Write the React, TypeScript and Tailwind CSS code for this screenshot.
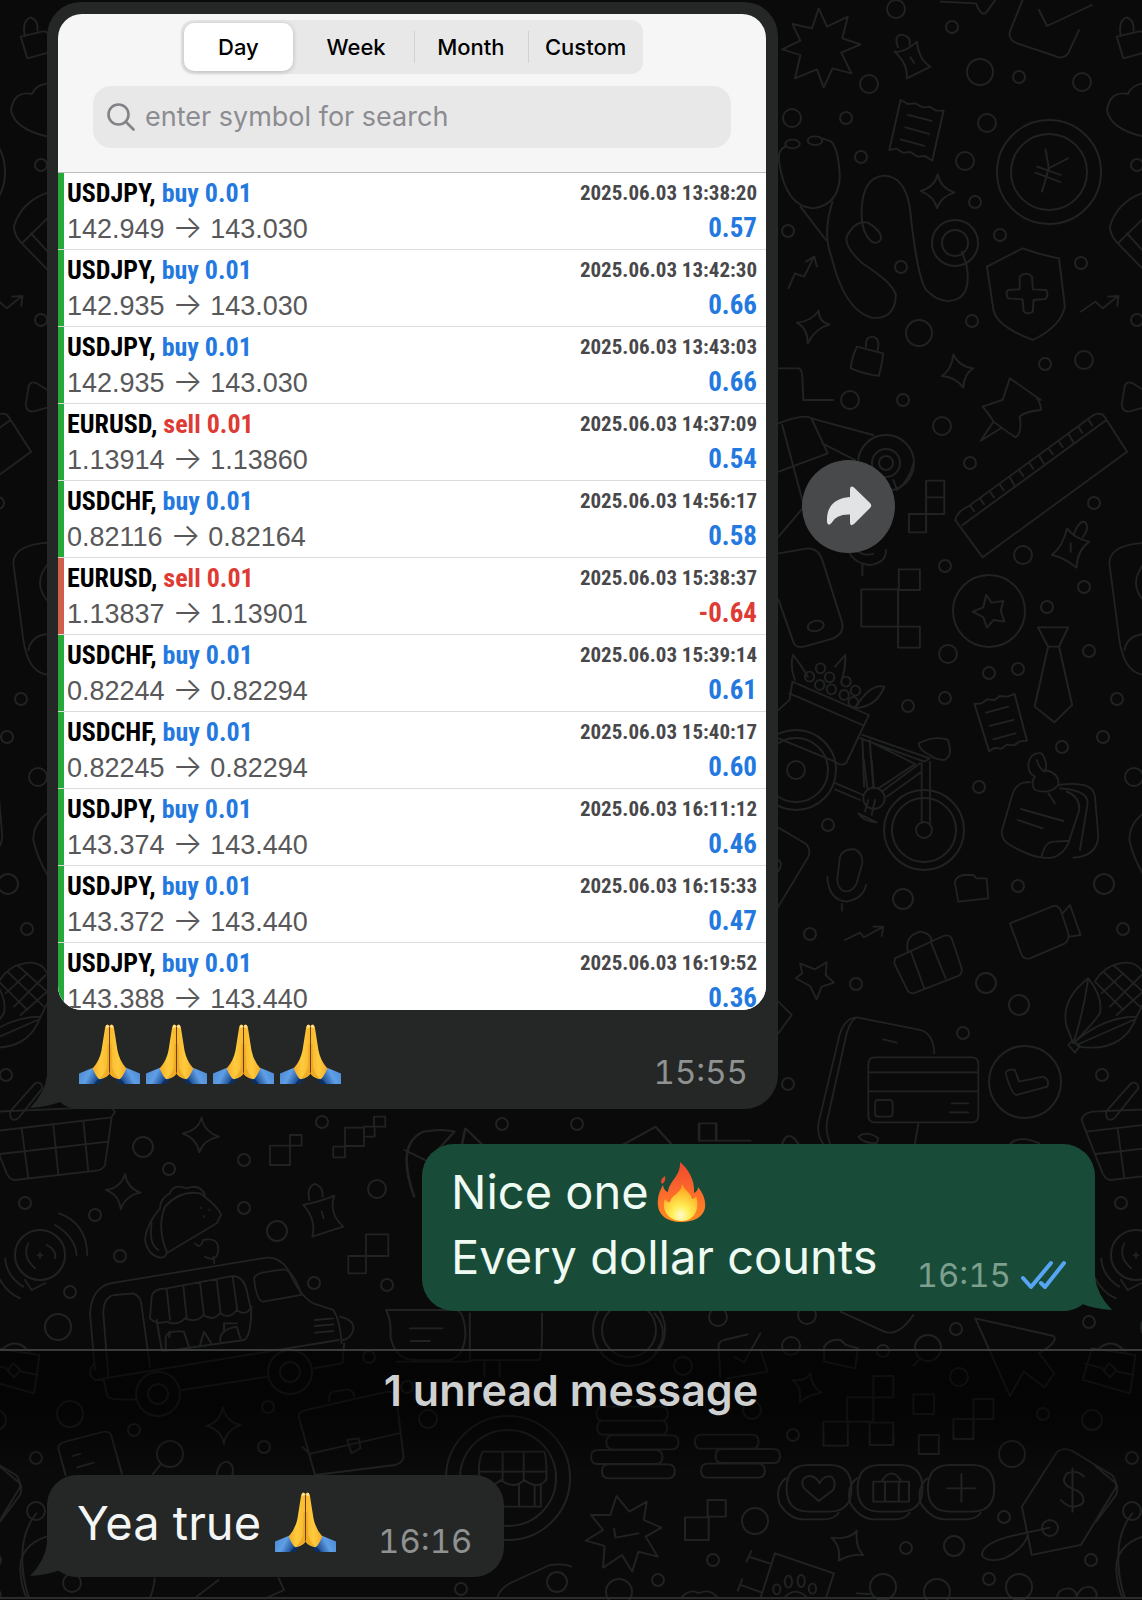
import React from "react";

type Trade = {
  symbol: string;
  side: "buy" | "sell";
  from: string;
  to: string;
  time: string;
  profit: string;
};

const trades: Trade[] = [
  { symbol: "USDJPY", side: "buy", from: "142.949", to: "143.030", time: "2025.06.03 13:38:20", profit: "0.57" },
  { symbol: "USDJPY", side: "buy", from: "142.935", to: "143.030", time: "2025.06.03 13:42:30", profit: "0.66" },
  { symbol: "USDJPY", side: "buy", from: "142.935", to: "143.030", time: "2025.06.03 13:43:03", profit: "0.66" },
  { symbol: "EURUSD", side: "sell", from: "1.13914", to: "1.13860", time: "2025.06.03 14:37:09", profit: "0.54" },
  { symbol: "USDCHF", side: "buy", from: "0.82116", to: "0.82164", time: "2025.06.03 14:56:17", profit: "0.58" },
  { symbol: "EURUSD", side: "sell", from: "1.13837", to: "1.13901", time: "2025.06.03 15:38:37", profit: "-0.64" },
  { symbol: "USDCHF", side: "buy", from: "0.82244", to: "0.82294", time: "2025.06.03 15:39:14", profit: "0.61" },
  { symbol: "USDCHF", side: "buy", from: "0.82245", to: "0.82294", time: "2025.06.03 15:40:17", profit: "0.60" },
  { symbol: "USDJPY", side: "buy", from: "143.374", to: "143.440", time: "2025.06.03 16:11:12", profit: "0.46" },
  { symbol: "USDJPY", side: "buy", from: "143.372", to: "143.440", time: "2025.06.03 16:15:33", profit: "0.47" },
  { symbol: "USDJPY", side: "buy", from: "143.388", to: "143.440", time: "2025.06.03 16:19:52", profit: "0.36" },
];

/* Wallpaper rings: centre x, centre y, radius. */
const rings: [number, number, number][] = [
  [896, 9, 9], [952, 27, 6], [869, 84, 9], [980, 72, 13], [1019, 77, 6], [1082, 82, 9], [792, 118, 9], [846, 118, 6],
  [987, 123, 9], [861, 157, 6], [965, 161, 9], [975, 202, 6], [1000, 235, 6], [1049, 172, 52], [1049, 172, 38],
  [788, 231, 6], [901, 267, 6], [955, 243, 23], [955, 243, 13], [1081, 263, 6], [972, 321, 6], [919, 333, 13],
  [1045, 364, 6], [1084, 360, 9], [1137, 165, 6], [1137, 320, 6], [850, 400, 9], [903, 400, 6],
  [942, 426, 9], [970, 463, 6], [1094, 503, 6], [1023, 555, 9], [945, 566, 6], [1084, 587, 6], [1047, 607, 6],
  [989, 611, 36], [948, 654, 9], [1089, 651, 6], [989, 673, 6], [1018, 669, 6], [1117, 699, 6], [945, 698, 6],
  [908, 706, 6], [1103, 737, 6], [1062, 747, 6], [979, 787, 6], [1134, 777, 9], [886, 463, 7], [886, 463, 14],
  [886, 463, 28], [796, 770, 9], [796, 770, 32], [796, 770, 40], [828, 825, 6], [903, 899, 10], [1018, 886, 6],
  [1104, 884, 10], [810, 934, 6], [1123, 929, 6], [856, 984, 6], [986, 983, 10], [1019, 1005, 10], [963, 1033, 6],
  [788, 1084, 6], [1102, 1075, 6], [1025, 1082, 36], [924, 830, 8], [924, 830, 32], [924, 830, 40],
  [143, 1147, 10], [169, 1169, 6], [322, 1122, 6], [244, 1160, 6], [25, 1203, 6], [95, 1215, 6], [244, 1208, 6],
  [377, 1189, 9], [277, 1231, 10], [120, 1256, 6], [70, 1292, 6], [314, 1283, 6], [387, 1285, 6], [58, 1327, 13],
  [40, 1255, 25], [70, 1414, 13], [134, 1430, 6], [36, 1458, 6], [170, 1454, 13], [264, 1447, 6], [268, 1407, 6],
  [36, 1511, 9], [369, 1357, 6], [428, 1419, 9], [158, 1394, 22], [158, 1394, 10], [290, 1372, 22], [290, 1372, 10],
  [508, 1478, 62], [508, 1478, 48], [461, 1589, 6], [557, 1582, 10], [72, 1583, 9], [407, 1387, 6],
  [718, 1317, 9], [807, 1315, 9], [791, 1346, 9], [883, 1351, 6], [928, 1348, 13], [956, 1329, 6], [1089, 1322, 6],
  [683, 1366, 9], [959, 1377, 9], [1092, 1420, 10], [1043, 1414, 6], [1012, 1454, 13], [793, 1435, 6], [752, 1410, 9],
  [755, 1521, 13], [713, 1560, 6], [954, 1546, 10], [906, 1548, 6], [1004, 1517, 6], [1091, 1560, 6], [658, 1580, 6],
  [989, 1579, 6], [883, 1587, 13], [937, 1592, 13], [1019, 1587, 13], [619, 1592, 13], [1050, 1528, 8],
  [629, 1330, 36], [629, 1330, 27], [502, 1124, 6], [577, 1124, 6],
];

/* Wallpaper doodles, grouped by the sheet region they belong to. */
const sheets: { place: string; d: string[] }[] = [
  {
    place: "scale(.3642 .3333)",
    d: [
      "M57 110L115 95Q131 90 134 110L142 155L75 175ZM68 108Q60 60 85 52Q105 60 103 92",
      "M140 250Q100 250 88 282Q40 270 30 330Q40 390 140 412",
      "M140 575Q60 600 38 680Q40 710 60 730L140 820M60 730L135 650M85 700L131 755",
    ],
  },
  {
    place: "translate(571 0) scale(.3642 .3333)",
    d: [
      "M680 25L703 80L760 50L745 115L795 133L742 158L770 220L718 205L694 262L675 208L615 235L630 165L580 148L630 122L608 72L662 85Z",
      "M888 155Q915 160 950 125Q955 180 987 200L922 235Q925 190 888 155ZM898 142Q885 105 910 104Q935 110 930 135M932 172l10 16",
      "M1240 0L1205 95Q1200 120 1225 130L1340 172Q1355 175 1365 160L1395 90M1285 30L1307 78L1430 15",
      "M1015 5L1112 10Q1130 60 1145 30L1165 0",
      "M905 300l20 12l20 -2l20 12l20 -2l18 12l20 0L992 482l-20 -14l-20 2l-20 -14l-20 2l-18 -12l-20 4ZM925 345l65 18M918 382l65 20M905 418l65 20",
      "M590 440Q565 450 572 490Q590 620 665 625Q735 615 738 530Q735 450 715 425L690 415",
      "M588 432a20 13 0 1 0 40 0a20 13 0 1 0 -40 0M650 422a20 13 0 1 0 40 0a20 13 0 1 0 -40 0",
      "M630 620L700 720M718 605Q690 700 715 770Q750 930 825 953Q890 960 892 885Q885 850 800 790Q750 740 757 710Q780 660 815 668Q850 690 852 715Q845 735 825 725Q800 700 798 650Q795 530 862 527Q915 530 930 620Q950 830 975 870Q1020 920 1065 895Q1100 870 1085 790L1073 755",
      "M1007 523Q1015 565 1053 577Q1015 590 1005 625Q998 590 960 573Q998 562 1007 523Z",
      "M1303 448L1312 505L1365 475M1312 505L1293 575M1280 500l65 25M1275 518l68 28",
      "M1142 800L1240 745Q1290 765 1340 775L1356 920Q1345 980 1268 1020Q1170 980 1160 930Z",
      "M1232 830Q1250 812 1266 830L1268 868L1305 870Q1312 885 1303 897L1270 900L1268 935Q1255 945 1243 935L1240 898L1200 895Q1192 880 1200 870L1232 868Z",
      "M597 865L615 820L640 830L665 775M645 785L668 770L675 800M1400 935L1440 905L1460 925L1500 890M1475 890L1503 888L1500 918",
      "M680 932Q680 965 710 973Q670 985 650 1030Q650 985 620 968Q660 965 680 932ZM1050 1063Q1065 1100 1105 1105Q1080 1120 1077 1163Q1055 1130 1018 1128Q1045 1110 1050 1063Z",
      "M785 1040Q770 1075 768 1105Q800 1120 845 1128Q855 1090 857 1060ZM810 1040Q808 1008 830 1010Q850 1018 842 1050",
      "M570 1105L625 1105Q635 1110 635 1130L638 1200L720 1200M1130 1220L1185 1200L1205 1135L1290 1200",
    ],
  },
  {
    place: "translate(571 400) scale(.3642 .3333)",
    d: [
      "M1130 20Q1150 45 1160 65Q1190 90 1220 112Q1240 100 1232 50Q1245 35 1290 30Q1290 10 1280 -5M1160 65L1125 122L1180 85",
      "M1055 360Q1060 335 1090 320L1435 45Q1455 35 1465 50L1527 155L1130 472ZM1075 375L1470 60",
      "M1097 318l10 16M1124 297l10 16M1151 276l10 16M1178 255l10 16M1205 233l12 22M1232 212l10 16M1259 190l10 16M1286 168l12 22M1313 147l10 16M1340 125l10 16M1367 104l12 22M1394 82l10 16M1421 60l10 16",
      "M975 242H1025V342H975ZM975 292H1025M928 342H975V397H928ZM797 568H898V680H797ZM900 508H958V570H900ZM898 680H958V743H898Z",
      "M570 70Q640 40 660 55L830 105M660 55L705 160L570 215M580 75L640 320L570 410M690 130L780 180M940 190Q930 240 895 270L885 240",
      "M570 460L650 445Q680 445 690 480L745 670Q750 700 720 715L640 740Q615 745 610 725L570 600M650 682a22 15 -15 1 0 44 -8a22 15 -15 1 0 -44 8",
      "M765 460Q780 490 820 495Q865 490 865 450M785 450Q800 470 830 462M800 495V525",
      "M1362 385Q1380 415 1423 425Q1390 450 1388 503Q1350 470 1320 465Q1350 440 1362 385ZM1382 400Q1395 360 1412 366Q1425 385 1405 412M1372 430v25",
      "M1140 585L1155 608L1187 603L1180 632L1190 665L1160 660L1142 683L1132 652L1103 635L1132 622Z",
      "M1282 682H1365L1340 740H1310ZM1310 740L1273 920L1327 967L1376 915L1340 740",
      "M1108 912l20 -2l15 -12l20 2l15 -12l20 2l20 -8L1252 1022l-20 2l-15 12l-20 -2l-15 12l-20 -2l-14 10ZM1140 938l60 -18M1150 978l65 -18M1160 1018l60 -18",
      "M608 845L818 945L755 1090Q740 1100 725 1085L570 1015M600 880L800 975M608 845L600 900L570 930M615 840Q600 800 610 765Q635 800 650 830M725 800L753 765Q755 800 745 835M780 925Q820 850 860 860Q840 920 780 925",
      "M672 805a13 15 0 1 0 26 0a13 15 0 1 0 -26 0M642 830a13 15 0 1 0 26 0a13 15 0 1 0 -26 0M697 832a13 15 0 1 0 26 0a13 15 0 1 0 -26 0M670 855a13 15 0 1 0 26 0a13 15 0 1 0 -26 0M702 868a13 15 0 1 0 26 0a13 15 0 1 0 -26 0M742 845a13 15 0 1 0 26 0a13 15 0 1 0 -26 0M768 872a13 15 0 1 0 26 0a13 15 0 1 0 -26 0M737 885a13 15 0 1 0 26 0a13 15 0 1 0 -26 0M762 906a13 15 0 1 0 26 0a13 15 0 1 0 -26 0",
      "M800 1005L985 1075L970 1085L795 1015M820 1020L830 1160M800 1015L805 1160M822 1025L945 1092L845 1165M955 1030Q1000 1005 1035 1020Q1050 1070 1025 1080Q1000 1080 985 1065Q955 1050 955 1030Z",
    ],
  },
  {
    place: "translate(740 760) scale(.3333)",
    d: [
      "M850 68Q825 75 815 110L785 215Q785 240 810 255Q870 290 910 293Q960 300 985 250L1018 150Q1020 110 980 95M850 68L870 66M905 290Q915 245 940 245L983 243M955 75Q1060 60 1065 110L1075 230Q1070 290 1000 293M960 85Q1045 90 1043 130L1020 270M843 147L970 183M833 180L908 205",
      "M865 15Q870 -25 905 -20Q925 10 915 30Q960 40 955 75Q930 105 885 90Q870 70 885 50Q865 40 865 15ZM890 0Q900 30 915 35M925 100l20 30",
      "M545 10V190M570 5V190M282 68L370 105M285 88L360 120M395 0L402 85M372 0L382 85M425 95L540 10M440 110L545 35M370 115a32 32 0 1 0 64 0a32 32 0 1 0 -64 0M385 120L375 155M405 120L395 165M355 160Q370 185 410 187L355 160",
      "M115 203L195 250Q215 265 205 290L115 440M115 300q16 10 0 34",
      "M300 290Q310 265 345 268Q370 280 367 310L350 370Q335 400 310 393Q290 380 292 355ZM262 350Q265 420 320 425Q370 415 378 375M306 432V452",
      "M645 370Q645 350 670 345H700L710 355H740L745 415Q700 420 655 425Z",
      "M810 490L940 438Q955 435 962 450L985 520Q988 540 975 550L870 595Q850 600 843 580ZM968 460L990 435L1022 525L988 530",
      "M315 540L360 518L372 532L430 500M400 500H430L425 528",
      "M465 595L610 528Q628 522 635 535L665 625Q668 640 655 648L520 700Q508 700 502 690L463 610ZM512 573L553 685M572 545L617 655M505 578Q490 530 540 515Q575 520 575 545",
      "M180 610L225 628L260 607L257 645L282 668L245 680L230 718L210 678L167 655L187 640Z",
      "M1045 655Q960 720 980 800L1000 850Q1030 760 1045 655Q1090 710 1080 760Q1060 790 1010 840M1000 850Q1090 770 1190 770Q1150 880 1015 860M1010 855L1180 780M985 855l12 -12l22 15l-14 20Z",
      "M1065 665Q1090 620 1140 610Q1190 600 1210 640Q1235 680 1215 720L1190 770M1065 665L1150 750M1090 635L1200 740M1110 740L1205 645M1085 700L1150 640M1120 615L1215 700M1130 765L1215 690",
      "M115 725L155 765L115 820",
      "M250 1152Q225 1120 240 1070L300 820Q315 775 350 772L540 810Q580 820 583 880M270 1150Q255 1110 262 1080L320 820Q330 785 350 772M430 838L470 848M535 1092L525 1150M355 1130Q380 1110 415 1135L410 1150Q370 1150 355 1130",
      "M405 892H695Q715 892 715 912V1067Q715 1087 695 1087H405Q385 1087 385 1067V912Q385 892 405 892ZM385 937H715M385 994H715M415 1020H448Q458 1020 458 1030V1060Q458 1070 448 1070H415Q405 1070 405 1060V1030Q405 1020 415 1020ZM635 1030H685M630 1057H685",
      "M797 940Q800 925 825 930L837 965L910 950Q930 960 922 980L830 1005Q815 1005 797 940Z",
    ],
  },
  {
    place: "translate(0 320) scale(.3333)",
    d: ["M145 212L110 190Q88 180 85 205L77 255Q80 275 98 275L145 262", "M145 1478Q100 1510 100 1560Q110 1610 145 1670"],
  },
  {
    place: "translate(0 500) scale(.3333)",
    d: ["M145 128Q40 135 40 190L70 420Q85 520 145 525M145 190Q95 250 145 305M85 450Q95 405 145 402"],
  },
  {
    place: "translate(0 960) scale(.3333)",
    d: [
      "M-43 480Q-40 460 -10 455L330 440L345 455L335 472L-30 515ZM-30 515L20 640Q30 660 45 660L290 632Q310 628 315 615L335 472M65 505L85 655M160 495L175 645M250 482L265 635M0 582L325 545",
      "M30 455L105 370Q125 362 127 385L55 475Q30 490 30 455Z",
      "M605 472Q612 515 657 530Q610 540 598 577Q590 535 548 520Q595 512 605 472ZM375 642Q382 685 422 698Q378 705 362 748Q358 705 317 690Q362 685 375 642Z",
      "M810 557H870V615H810ZM870 525H905V557H870ZM1035 503H1092V558H1035ZM1000 560H1035V592H1000ZM1092 500h32v30h-32ZM1122 470h34v30h-34ZM1098 823H1165V888H1098ZM1045 888H1098V940H1045Z",
      "M480 745Q440 790 435 840Q445 890 485 893Q500 890 500 875Q470 800 495 740Q540 690 600 700Q655 740 663 765L650 790L500 880M480 745Q480 715 510 700Q520 670 560 685Q600 670 615 705M455 790Q445 850 475 870M585 850Q600 870 610 840Q655 830 655 870Q650 910 615 890M640 890L643 910M603 742v2M628 748v2M612 768v2",
      "M75 960L95 990L135 970M85 850Q65 890 105 925M140 855Q170 870 165 895M165 795Q225 830 230 885M178 760Q260 790 262 885M15 895Q20 950 70 980M-5 950Q20 1000 60 1015M113 886h14M120 879v14",
      "M910 735Q960 725 1003 707Q985 760 1030 800L937 830Q950 780 910 735ZM928 720Q920 680 945 672Q970 680 968 710M965 755l6 20",
      "M285 1230L270 1060Q275 985 330 970L800 893Q840 890 865 930Q900 1010 940 1030L1000 1050Q1020 1080 1025 1150M325 1250L310 1060Q310 1010 345 1005L400 1000Q425 1010 425 1040L450 1220",
      "M762 955Q770 940 790 937L850 928Q880 930 905 1005L790 1025Q770 1025 762 955Z",
      "M455 1010Q460 985 500 985L700 948Q730 950 740 990L752 1045Q735 1070 710 1050Q690 1080 660 1060Q640 1085 610 1065Q590 1090 555 1075Q530 1100 500 1085Q470 1095 450 1075ZM500 985L510 1080M550 978L560 1072M600 968L612 1065M650 958L662 1060M698 950L712 1050",
      "M1020 1070Q1065 1080 1060 1110Q1050 1140 1025 1140M945 1080l55 -5M945 1098l55 -5M945 1118l55 -5",
    ],
  },
  {
    place: "translate(0 1300) scale(.3642 .3333)",
    d: [
      "M270 238L930 120M260 190Q235 215 260 240L285 240L295 290Q305 302 375 298M500 270L735 230M860 205L940 190L945 130M430 60L445 155L670 120Q690 110 690 20",
      "M455 150V110Q460 90 505 95L520 145M465 95V112M548 140L560 95L580 130M605 125Q600 90 650 80L660 115M615 90V70H650",
      "M820 350Q820 335 840 330L1065 275Q1085 275 1088 290L1108 470Q1105 490 1085 495L865 525ZM830 440L850 462L1095 400M905 305Q900 280 915 275L955 268Q970 270 973 290M953 420L985 415L990 445L965 460Z",
      "M440 495L420 522M595 525Q600 485 625 485Q645 495 638 525",
      "M612 322Q620 365 660 375Q620 390 615 432Q608 390 567 378Q605 365 612 322Z",
      "M180 525L160 445Q160 430 180 425L285 395Q300 393 305 405L335 522M200 468l20 -6M212 502l45 -14",
      "M1060 30Q1075 60 1072 110Q1085 180 1140 180H1235Q1275 170 1278 100Q1275 40 1255 30ZM1125 85H1215M1128 123H1180M1290 40V180H1480Q1490 175 1488 40M1090 185H1290M1330 185V230M1372 185V230",
      "M1325 455H1495Q1502 480 1500 540M1325 455Q1310 490 1318 540Q1345 570 1375 540Q1410 570 1440 540Q1475 570 1500 540M1380 455V540M1438 455V540M1318 515H1498M1485 555V620H1345V555M1425 550V615M1468 555V618",
      "M0 500L55 550Q62 565 55 585L0 665M100 640Q55 700 62 800Q65 850 80 895M425 835Q420 880 410 895M540 890L600 840M765 835L780 870L730 895M1365 895Q1370 870 1400 850L1510 795Q1550 790 1568 800",
    ],
  },
  {
    place: "translate(571 1300) scale(.3642 .3333)",
    d: [
      "M230 40Q275 100 230 160M740 35L860 95Q900 110 940 45",
      "M410 230L405 140Q405 125 420 120L485 103M520 150L540 215L430 235M450 172L475 187L520 100",
      "M695 140Q710 115 740 120L755 135L788 145L780 205L695 185Z",
      "M1110 55L1325 108Q1340 125 1285 160L1327 220L1300 262L1243 215L1205 288ZM955 180L940 198",
      "M1430 145L1550 165L1535 280L1405 240ZM1410 190L1460 205M1500 215L1545 225M1478 190l20 20l-18 22l-18 -20ZM1450 145Q1490 110 1525 160",
      "M657 220Q660 260 688 278Q650 285 628 308Q635 260 608 240Q645 245 657 220ZM785 692Q780 740 802 765Q765 762 735 782Q742 740 715 713Q765 720 785 692Z",
      "M830 228H885V292H830ZM758 292H830V365H758ZM693 365H760V437H693ZM820 368H885V435H820ZM940 283H997V342H940ZM955 405H1010V462H955ZM1105 297H1160V357H1105ZM1050 357H1105V417H1050ZM375 600H425V650H375ZM313 652H378V720H313Z",
      "M88 320h160q18 0 18 21t-18 21h-160q-18 0 -18 -21t18 -21ZM90 362h156q18 0 18 21t-18 21h-156q-18 0 -18 -21t18 -21ZM115 406h162q18 0 18 21t-18 21h-162q-18 0 -18 -21t18 -21ZM73 450h160q18 0 18 21t-18 21h-160q-18 0 -18 -21t18 -21ZM103 493h164q18 0 18 21t-18 21h-164q-18 0 -18 -21t18 -21ZM358 404h139q18 0 18 21t-18 21h-139q-18 0 -18 -21t18 -21ZM415 447h141q18 0 18 21t-18 21h-141q-18 0 -18 -21t18 -21ZM375 491h139q18 0 18 21t-18 21h-139q-18 0 -18 -21t18 -21Z",
      "M652 495h58q60 0 60 70t-60 70h-58q-60 0 -60 -70t60 -70ZM847 495h58q60 0 60 70t-60 70h-58q-60 0 -60 -70t60 -70ZM1040 495h62q60 0 60 70t-60 70h-62q-60 0 -60 -70t60 -70Z",
      "M590 535Q560 560 572 610Q600 660 640 658H700Q725 655 735 638M785 535Q755 560 767 610Q795 660 835 658H895Q920 655 930 638M978 535Q950 560 960 610Q990 660 1030 658H1090Q1115 655 1125 638",
      "M680 603L640 565Q625 535 655 528Q675 530 682 550Q695 525 715 530Q730 545 720 570ZM830 545H928V605H830ZM862 545V605M900 545V605M855 540Q880 500 905 540M1033 565H1110M1072 522V605",
      "M1335 455Q1355 440 1380 455L1485 525Q1500 545 1495 565L1400 735L1265 765L1238 620ZM1408 530Q1390 508 1362 520Q1340 550 1375 565Q1415 580 1405 610Q1375 635 1345 600M1377 505V635M1314 683L1210 708Q1130 730 1128 765Q1140 790 1190 775Q1240 750 1255 705",
      "M125 588L160 635L208 605L200 660L248 683L205 710L238 770L185 755L168 815L140 765L88 803L92 738L40 722L88 690L55 645L108 645ZM118 685L122 713L185 700",
      "M495 753L482 785M487 770L545 790M560 760L722 820L700 895M560 760L520 895M470 838L458 872M465 855L525 878M587 845a10 18 0 1 0 20 0a10 18 0 1 0 -20 0M622 843a10 18 0 1 0 20 0a10 18 0 1 0 -20 0M555 868a10 15 0 1 0 20 0a10 15 0 1 0 -20 0M653 866a10 15 0 1 0 20 0a10 15 0 1 0 -20 0M585 895Q615 855 650 895",
      "M1568 710Q1490 740 1498 820Q1500 860 1515 895M1335 895Q1335 865 1370 865Q1390 875 1388 890Q1400 855 1430 862Q1450 880 1440 895M305 890Q330 865 350 880Q380 865 400 890M785 880L820 882",
    ],
  },
  {
    place: "translate(400 1100) scale(.4733 .3333)",
    d: [
      "M30 290Q-10 130 50 95Q90 85 115 95L60 180M130 140L138 85L178 140M10 150L60 185M470 135L540 80L575 135M632 70H668V122H632ZM668 122H740M805 140Q820 75 845 140M1290 130Q1310 105 1350 130",
    ],
  },
];

function Doodles() {
  return (
    <g>
      {rings.map(([x, y, r]) => (
        <circle key={`${x}-${y}-${r}`} cx={x} cy={y} r={r} strokeWidth="2" />
      ))}
      {sheets.map((sheet) => (
        <g key={sheet.place} transform={sheet.place} strokeWidth="5.5">
          {sheet.d.map((d) => (
            <path key={d} d={d} />
          ))}
        </g>
      ))}
    </g>
  );
}

function Wallpaper() {
  return (
    <svg
      aria-hidden="true"
      viewBox="0 0 1142 1600"
      preserveAspectRatio="xMidYMin slice"
      className="absolute inset-0 h-full w-full"
      fill="none"
      stroke="#212222"
      strokeLinejoin="round"
      strokeLinecap="round"
    >
      <Doodles />
      <g transform="translate(-1096 0)">
        <Doodles />
      </g>
      <g transform="translate(1096 0)">
        <Doodles />
      </g>
    </svg>
  );
}

function PrayingHands() {
  const id = React.useId();
  const half = (
    <>
      <path d="M0 148L42 131Q56 150 62 163Q52 172 46 180H0Z" fill={`url(#${id}s)`} />
      <path d="M46 180Q54 170 62 162L78 157L60 180Z" fill="#0c2f63" />
      <path
        d="M79 8Q82 -1 88 1Q93 3 93 12V146Q88 160 62 166Q54 162 41 133Q62 110 68 78Q74 40 79 8Z"
        fill={`url(#${id}h)`}
      />
      <path d="M86 60L84 128Q80 148 62 164Q86 160 93 146V60Z" fill="#e89a1c" opacity=".55" />
      <path d="M81 5Q85 0 90 4L89 10H81Z" fill="#ffe3a0" />
    </>
  );
  return (
    <svg role="img" aria-label="🙏" viewBox="0 0 184 182" className="h-[61px] w-[61px] shrink-0">
      <defs>
        <linearGradient id={`${id}s`} x1="0" y1="0" x2="1" y2="0.4">
          <stop offset="0" stopColor="#4a86d0" />
          <stop offset=".55" stopColor="#5f9fe6" />
          <stop offset="1" stopColor="#1f4f94" />
        </linearGradient>
        <linearGradient id={`${id}h`} x1="0" y1="0" x2="1" y2="0">
          <stop offset="0" stopColor="#f4ac2a" />
          <stop offset=".5" stopColor="#ffcb3d" />
          <stop offset="1" stopColor="#f7b62e" />
        </linearGradient>
      </defs>
      {half}
      <g transform="translate(184 0) scale(-1 1)">{half}</g>
      <path d="M92 8V146" stroke="#6b3f06" strokeWidth="3" />
    </svg>
  );
}

function Fire() {
  return (
    <svg role="img" aria-label="🔥" viewBox="0 0 49 60" className="h-15 w-[49px] shrink-0">
      <defs>
        <linearGradient id="flame" x1="0" y1="0" x2="0" y2="1">
          <stop offset="0" stopColor="#f0472f" />
          <stop offset=".5" stopColor="#fb6a2c" />
          <stop offset="1" stopColor="#ff8b1f" />
        </linearGradient>
        <radialGradient id="core" cx=".5" cy=".85" r=".75">
          <stop offset="0" stopColor="#fffbd0" />
          <stop offset=".35" stopColor="#ffee55" />
          <stop offset="1" stopColor="#ffa51f" />
        </radialGradient>
      </defs>
      <path
        d="M23 0C31 7 38 17 37 31Q41 29 41 25C47 32 49 40 48 46C46 55 37 60 24 60C10 60 2 53 1 44C0 35 3 28 6 23Q7 29 11 30C12 19 24 14 23 0Z"
        fill="url(#flame)"
      />
      <path d="M8 14Q2 18 5 22Q9 20 8 14Z" fill="#f0472f" />
      <path
        d="M25 22C29 30 34 31 35 37Q38 37 39 34C43 46 38 59 25 59C11 59 4 48 8 37Q10 41 13 40C15 32 25 31 25 22Z"
        fill="url(#core)"
      />
    </svg>
  );
}

function Tail({ side, color }: { side: "left" | "right"; color: string }) {
  return (
    <svg
      aria-hidden="true"
      viewBox="0 0 50 40"
      fill={color}
      className={
        side === "left"
          ? "absolute bottom-0 -left-[18px] h-10 w-[50px]"
          : "absolute -right-[18px] bottom-0 h-10 w-[50px] -scale-x-100"
      }
    >
      <path d="M18 0V6Q16 24 1 39Q18 38 31 33Q38 40 50 40V0Z" />
    </svg>
  );
}

const periods = ["Day", "Week", "Month", "Custom"];

function PeriodTabs() {
  return (
    <div role="tablist" className="mx-auto grid w-[462px] grid-cols-4 rounded-[12px] bg-[#e8e8e8] py-[3px] pl-[3px]">
      {periods.map((name, i) => (
        <button
          key={name}
          role="tab"
          aria-selected={i === 0}
          className={
            i === 0
              ? "mr-1.5 h-12 rounded-[10px] bg-white text-[22px] font-medium shadow-[0_1px_5px_rgba(0,0,0,0.22)]"
              : i === 1
                ? "h-12 text-[22px] font-medium"
                : "relative h-12 text-[22px] font-medium before:absolute before:top-2 before:left-0 before:h-8 before:w-px before:bg-[#d2d2d4]"
          }
        >
          {name}
        </button>
      ))}
    </div>
  );
}

function TradeRow({ trade, last }: { trade: Trade; last: boolean }) {
  const loss = trade.profit.startsWith("-");
  return (
    <li
      className={
        (last ? "h-[67px] overflow-hidden " : "h-[77px] border-b border-[#dcdcdc] ") +
        "flex bg-white font-['Roboto_Condensed','Roboto',sans-serif]"
      }
    >
      <span className={loss ? "w-1.5 bg-[#cf5f4c]" : "w-1.5 bg-[#26a93a]"} />
      <div className="flex-1 pt-0.5 pl-[3px]">
        <p className="text-[26px] leading-9 font-bold text-black">
          {trade.symbol}, <span className={trade.side === "buy" ? "text-[#2479e0]" : "text-[#dd3b34]"}>{trade.side} 0.01</span>
        </p>
        <p className="font-['Liberation_Sans',sans-serif] text-[27px] leading-[34px] text-[#58585a]">
          {trade.from} <span className="font-['Inter',sans-serif] text-[32px] leading-none font-light">→</span> {trade.to}
        </p>
      </div>
      <div className="pt-0.5 pr-[9px] text-right font-bold">
        <p className="text-[21px] leading-9 text-[#48484a]">{trade.time}</p>
        <p className={"text-[27px] leading-[34px] " + (loss ? "text-[#dd3b34]" : "text-[#2479e0]")}>{trade.profit}</p>
      </div>
    </li>
  );
}

function HistoryShot() {
  return (
    <div className="overflow-hidden rounded-[24px] bg-[#f6f6f6]">
      <div className="border-b border-[#bdbdbf] px-[35px] pt-1.5 pb-6">
        <PeriodTabs />
        <label className="mt-3 flex h-[62px] items-center gap-2.5 rounded-[18px] bg-[#e8e8e9] px-3.5">
          <svg viewBox="0 0 28 28" className="h-7 w-7" fill="none" stroke="#828287" strokeWidth="2.6" strokeLinecap="round">
            <circle cx="11.500" cy="11.500" r="10" />
            <path d="M19 19L26.500 26.500" />
          </svg>
          <input
            type="search"
            aria-label="Search symbol"
            placeholder="enter symbol for search"
            className="min-w-0 flex-1 bg-transparent text-[27px] outline-none placeholder:text-[#8c8c91]"
          />
        </label>
      </div>
      <ul>
        {trades.map((t, i) => (
          <TradeRow key={t.time} trade={t} last={i === trades.length - 1} />
        ))}
      </ul>
    </div>
  );
}

export default function App() {
  return (
    <main className="relative flex min-h-screen flex-col overflow-hidden bg-[#0a0a0a] font-['Inter',sans-serif]">
      <Wallpaper />

      <section className="relative mt-0.5 flex items-center pl-[47px]">
        <article className="relative w-full max-w-[731px] rounded-[34px] bg-[#242726] pt-3 pr-3 pl-[11px]">
          <Tail side="left" color="#242726" />
          <div className="relative">
            <HistoryShot />
            <div className="flex items-end justify-between pt-3.5 pr-[18px] pb-4 pl-[21px]">
              <p className="flex gap-1.5 pb-2">
                <PrayingHands />
                <PrayingHands />
                <PrayingHands />
                <PrayingHands />
              </p>
              <time className="pb-px text-[33px] leading-10 text-[#909292] tabular-nums">15:55</time>
            </div>
          </div>
        </article>
        <button
          aria-label="Forward"
          className="mb-[98px] ml-6 flex size-[93px] shrink-0 items-center justify-center rounded-full bg-[#48494b]"
        >
          <svg viewBox="-1 0 46 41" className="h-[41px] w-[46px]" fill="#e2e3e4">
            <path d="M23 3.500Q23 -1 27 1.500L43 17Q45.500 19.500 43 22L27 38Q23 41 23 36V28.500Q9 28 4.500 37Q1 41 0 36Q-1 13 23 11Z" />
          </svg>
        </button>
      </section>

      <article className="relative mt-[35px] mr-[47px] flex w-full max-w-[673px] items-end justify-between self-end rounded-[32px] bg-[#184c38] pt-[15px] pr-7 pb-4 pl-[29px]">
        <Tail side="right" color="#184c38" />
        <p className="relative pb-1.5 text-[47px] leading-[65px] whitespace-nowrap text-[#eefaf2]">
          <span className="flex items-center gap-2">
            Nice one <Fire />
          </span>
          Every dollar counts
        </p>
        <p className="relative flex items-center gap-2.5">
          <time className="text-[33px] leading-10 text-[#7c9f8e] tabular-nums">16:15</time>
          <svg role="img" aria-label="Read" viewBox="0 0 46 30" className="h-[30px] w-[46px]" fill="none" stroke="#57a5f3" strokeWidth="4" strokeLinecap="round" strokeLinejoin="round">
            <path d="M2 18L10 27L30 3M20 23L24 27L43 3" />
          </svg>
        </p>
      </article>

      <div className="relative mt-[38px] flex h-[126px] justify-center border-t-2 border-[#3a3b3b] bg-linear-to-b from-black/55 via-black/55 to-transparent pt-[13px]">
        <h2 className="text-[43px] leading-[52px] font-semibold text-[#cfd0d0]">1 unread message</h2>
      </div>

      <article className="relative ml-[47px] flex items-end gap-[42px] self-start rounded-[30px] bg-[#242726] pt-[15px] pr-[31px] pb-4 pl-[30px]">
        <Tail side="left" color="#242726" />
        <p className="relative flex items-center gap-3.5 pb-1.5 text-[47px] leading-[65px] whitespace-nowrap text-[#f4f5f5]">
          Yea true <PrayingHands />
        </p>
        <time className="relative text-[33px] leading-10 text-[#909292] tabular-nums">16:16</time>
      </article>
      <div className="relative mt-5 h-0.5 bg-[#2b2c2c]" />
    </main>
  );
}
